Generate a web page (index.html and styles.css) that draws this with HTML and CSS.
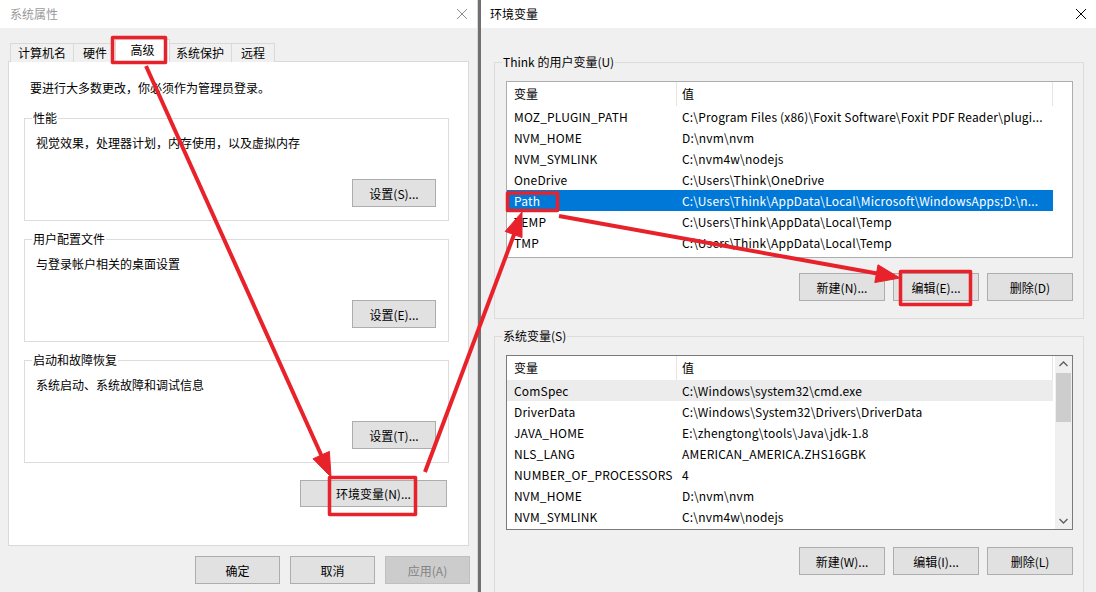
FILE: index.html
```html
<!DOCTYPE html>
<html lang="zh-CN">
  <head>
    <meta charset="UTF-8" />
    <title>系统属性 - 环境变量</title>
    <link rel="stylesheet" href="styles.css">
  </head>
  <body>
    <div class="desk">
      <section class="win sys">
        <header class="titlebar">
          <span class="title">系统属性</span>
          <svg class="close" viewBox="0 0 10 10"><path d="M0 0L10 10M10 0L0 10" /></svg>
        </header>

        <div class="tabs">
          <span class="tab">计算机名</span>
          <span class="tab">硬件</span>
          <span class="tab active">高级</span>
          <span class="tab">系统保护</span>
          <span class="tab">远程</span>
        </div>

        <div class="panel">
          <p class="note">要进行大多数更改，你必须作为管理员登录。</p>

          <fieldset class="group first">
            <legend>性能</legend>
            <p>视觉效果，处理器计划，内存使用，以及虚拟内存</p>
            <div class="actions"><button>设置(S)...</button></div>
          </fieldset>

          <fieldset class="group">
            <legend>用户配置文件</legend>
            <p>与登录帐户相关的桌面设置</p>
            <div class="actions"><button>设置(E)...</button></div>
          </fieldset>

          <fieldset class="group">
            <legend>启动和故障恢复</legend>
            <p>系统启动、系统故障和调试信息</p>
            <div class="actions"><button>设置(T)...</button></div>
          </fieldset>

          <div class="env-row"><button class="is-wide">环境变量(N)...</button></div>
        </div>

        <footer class="dialog-buttons">
          <button>确定</button>
          <button>取消</button>
          <button disabled>应用(A)</button>
        </footer>
      </section>

      <div class="divider"></div>

      <section class="win env">
        <header class="titlebar">
          <span class="title">环境变量</span>
          <svg class="close" viewBox="0 0 10 10"><path d="M0 0L10 10M10 0L0 10" /></svg>
        </header>

        <div class="env-body">
          <fieldset class="vgroup">
            <legend>Think 的用户变量(U)</legend>
            <div class="list is-user">
              <div class="table">
                <div class="head"><span class="c1">变量</span><span class="c2">值</span><span class="c3"></span></div>
                <div class="row"><span class="c1">MOZ_PLUGIN_PATH</span><span class="c2">C:\Program Files (x86)\Foxit Software\Foxit PDF Reader\plugi...</span></div>
                <div class="row"><span class="c1">NVM_HOME</span><span class="c2">D:\nvm\nvm</span></div>
                <div class="row"><span class="c1">NVM_SYMLINK</span><span class="c2">C:\nvm4w\nodejs</span></div>
                <div class="row"><span class="c1">OneDrive</span><span class="c2">C:\Users\Think\OneDrive</span></div>
                <div class="row sel"><span class="c1">Path</span><span class="c2">C:\Users\Think\AppData\Local\Microsoft\WindowsApps;D:\n...</span></div>
                <div class="row"><span class="c1">TEMP</span><span class="c2">C:\Users\Think\AppData\Local\Temp</span></div>
                <div class="row"><span class="c1">TMP</span><span class="c2">C:\Users\Think\AppData\Local\Temp</span></div>
              </div>
            </div>
            <div class="btn-row">
              <button>新建(N)...</button>
              <button>编辑(E)...</button>
              <button>删除(D)</button>
            </div>
          </fieldset>

          <fieldset class="vgroup">
            <legend>系统变量(S)</legend>
            <div class="list is-sys">
              <div class="table">
                <div class="head"><span class="c1">变量</span><span class="c2">值</span></div>
                <div class="row hover"><span class="c1">ComSpec</span><span class="c2">C:\Windows\system32\cmd.exe</span></div>
                <div class="row"><span class="c1">DriverData</span><span class="c2">C:\Windows\System32\Drivers\DriverData</span></div>
                <div class="row"><span class="c1">JAVA_HOME</span><span class="c2">E:\zhengtong\tools\Java\jdk-1.8</span></div>
                <div class="row"><span class="c1">NLS_LANG</span><span class="c2">AMERICAN_AMERICA.ZHS16GBK</span></div>
                <div class="row"><span class="c1">NUMBER_OF_PROCESSORS</span><span class="c2">4</span></div>
                <div class="row"><span class="c1">NVM_HOME</span><span class="c2">D:\nvm\nvm</span></div>
                <div class="row"><span class="c1">NVM_SYMLINK</span><span class="c2">C:\nvm4w\nodejs</span></div>
              </div>
              <div class="scrollbar">
                <svg class="arrow" viewBox="0 0 17 17"><path d="M4.5 10L8.5 6L12.5 10" /></svg>
                <div class="thumb"></div>
                <svg class="arrow down" viewBox="0 0 17 17"><path d="M4.5 7L8.5 11L12.5 7" /></svg>
              </div>
            </div>
            <div class="btn-row">
              <button>新建(W)...</button>
              <button>编辑(I)...</button>
              <button>删除(L)</button>
            </div>
          </fieldset>
        </div>
      </section>
    </div>

    <!-- red annotations drawn over the screenshot -->
    <svg class="marks" viewBox="0 0 1096 592">
      <rect x="112.5" y="37.5" width="53" height="25" />
      <rect x="507.5" y="193" width="50" height="17.5" />
      <rect x="900.5" y="271.5" width="70" height="33" />
      <rect x="329.5" y="477.5" width="86" height="37" />

      <line x1="146" y1="66" x2="323" y2="459" />
      <polygon points="331,477 313,458.8 329.4,451.4" />

      <line x1="425" y1="472" x2="515" y2="232" />
      <polygon points="522,212 522,237.6 505.2,231.4" />

      <line x1="559" y1="216" x2="880" y2="274" />
      <polygon points="900,278 874.8,282.5 878,264.8" />
    </svg>
  </body>
</html>
```

FILE: styles.css
```css
*,
*::before,
*::after {
  box-sizing: border-box;
  margin: 0;
  padding: 0;
}

body {
  font-family: 'Noto Sans CJK SC', 'Noto Sans', sans-serif;
  font-size: 12px;
  color: #000;
  background: #f0f0f0;
  width: 1096px;
  height: 592px;
  overflow: hidden;
  position: relative;
}

button {
  font: inherit;
  color: #000;
  width: 84px;
  height: 28px;
  background: #e1e1e1;
  border: 1px solid #adadad;

  &:disabled {
    background: #cccccc;
    border-color: #bfbfbf;
    color: #838383;
  }
}

.desk {
  display: flex;
  height: 592px;
}

.win {
  display: flex;
  flex-direction: column;
  background: #f0f0f0;

  &.sys {
    width: 477px;
  }

  &.env {
    flex: 1;
  }
}

.divider {
  width: 4px;
  border-left: 1px solid #d8d8d8;
  background: #707070;
}

.titlebar {
  flex-shrink: 0;
  height: 28px;
  background: #fff;
  display: flex;
  align-items: center;
  justify-content: space-between;
  padding: 0 10px 0 9px;

  & .title {
    line-height: 16px;
  }

  & .close {
    width: 10px;
    height: 10px;
    fill: none;
    stroke: #000;
    stroke-width: 1;
  }
}

.sys .titlebar {
  padding-left: 10px;

  & .title {
    color: #9a9a9a;
  }

  & .close {
    stroke: #8c8c8c;
  }
}

/* tabs */
.tabs {
  display: flex;
  align-items: flex-end;
  height: 22px;
  margin: 12px 0 -1px 10px;
  position: relative;
  z-index: 1;
}

.tab {
  height: 19px;
  line-height: 18px;
  padding: 0 7px;
  min-width: 44px;
  text-align: center;
  border: 1px solid #d9d9d9;
  border-bottom: 0;
  margin-right: -1px;
  background: #f0f0f0;

  &.active {
    height: 23px;
    line-height: 20px;
    min-width: 55px;
    margin: 0 -2px 0 -1px;
    background: #fff;
    position: relative;
  }
}

.panel {
  margin: 0 8px;
  height: 485px;
  background: #fff;
  border: 1px solid #d9d9d9;
  padding: 18px 0 0 15px;
}

.note {
  line-height: 16px;
  padding-left: 6px;
}

.group {
  width: 425px;
  border: 1px solid #dcdcdc;
  padding: 10px 12px 13px 11px;
  margin-top: 11px;

  &.first {
    margin-top: 15px;
  }

  & legend {
    line-height: 14px;
    padding: 0 1px;
    margin-left: -4px;
  }

  & p {
    line-height: 16px;
  }

  & .actions {
    display: flex;
    justify-content: flex-end;
    margin-top: 28px;
  }
}

.env-row {
  display: flex;
  justify-content: flex-end;
  margin: 17px 21px 0 0;

  & .is-wide {
    width: 147px;
    height: 27px;
  }
}

.dialog-buttons {
  display: flex;
  justify-content: flex-end;
  gap: 10px;
  padding: 10px 7px 0 0;

  & button {
    width: 85px;
  }
}

/* environment variables window */
.env-body {
  padding: 27px 12px 0 13px;
}

.vgroup {
  border: 1px solid #dcdcdc;
  padding: 12px 10px 17px 11px;

  & + .vgroup {
    margin-top: 10px;
    padding-bottom: 40px;
  }

  & legend {
    line-height: 14px;
    padding: 0 1px;
    margin-left: -4px;
  }
}

.list {
  display: flex;
  background: #fff;
  border: 1px solid #adadad;
  overflow: hidden;

  &.is-user {
    height: 177px;
  }

  &.is-sys {
    height: 175px;
    border-color: #7a7a7a;
  }

  & .table {
    flex: 1;
  }

  & .c1 {
    width: 170px;
    padding-left: 7px;
    flex-shrink: 0;
  }

  & .c2 {
    width: 376px;
    padding-left: 5px;
    flex-shrink: 0;
    white-space: nowrap;
    overflow: hidden;
  }

  & .head {
    display: flex;
    height: 24px;
    line-height: 24px;

    & span {
      border-right: 1px solid #e5e5e5;
    }

    & .c3 {
      flex: 1;
      border: 0;
    }
  }

  & .row {
    display: flex;
    width: 546px;
    height: 21px;
    line-height: 21px;
    letter-spacing: 0.18px;

    &.sel {
      background: #0078d7;
      color: #fff;
    }

    &.hover {
      background: #ececec;
    }
  }
}

.scrollbar {
  width: 17px;
  background: #f0f0f0;
  display: flex;
  flex-direction: column;

  & .arrow {
    width: 17px;
    height: 17px;
    fill: none;
    stroke: #606060;
    stroke-width: 1.4;
  }

  & .down {
    margin-top: auto;
  }

  & .thumb {
    height: 49px;
    margin: 0 1px;
    background: #cdcdcd;
  }
}

.btn-row {
  display: flex;
  justify-content: flex-end;
  gap: 8px;
  margin-top: 15px;

  & button {
    width: 86px;
  }
}

.is-sys + .btn-row {
  margin-top: 17px;
}

/* annotation overlay */
.marks {
  position: absolute;
  top: 0;
  left: 0;
  z-index: 2;
  width: 1096px;
  height: 592px;
  pointer-events: none;
  fill: none;
  stroke: #e8222a;
  stroke-width: 3.5;
  stroke-linejoin: round;

  & line {
    stroke-width: 4;
  }

  & polygon {
    fill: #e8222a;
    stroke-width: 1;
  }
}
```
